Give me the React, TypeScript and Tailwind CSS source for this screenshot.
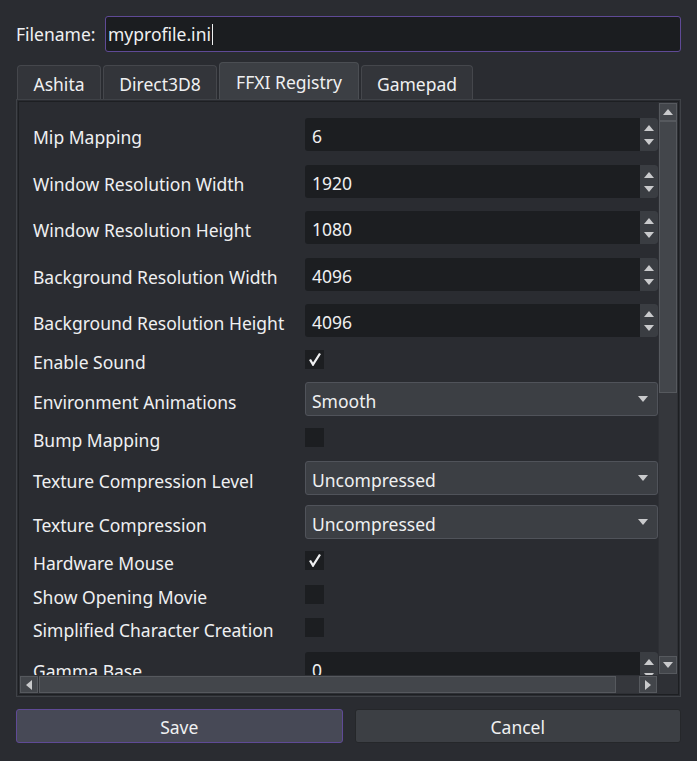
import React from "react";

function UpTri({ className = "" }: { className?: string }) {
  return (
    <svg width="10" height="6" viewBox="0 0 10 6" className={className}>
      <polygon points="0,6 10,6 5,0" fill="#c9cacc" />
    </svg>
  );
}
function DownTri({ className = "" }: { className?: string }) {
  return (
    <svg width="10" height="6" viewBox="0 0 10 6" className={className}>
      <polygon points="0,0 10,0 5,6" fill="#c9cacc" />
    </svg>
  );
}
function LeftTri() {
  return (
    <svg width="6" height="10" viewBox="0 0 6 10">
      <polygon points="6,0 6,10 0,5" fill="#c9cacc" />
    </svg>
  );
}
function RightTri() {
  return (
    <svg width="6" height="10" viewBox="0 0 6 10">
      <polygon points="0,0 0,10 6,5" fill="#c9cacc" />
    </svg>
  );
}

function Spin({ value }: { value: string }) {
  return (
    <div className="flex w-[356px] h-[33px] rounded-[3px] bg-[#1c1e21] overflow-hidden">
      <div className="flex-1 flex items-center pl-[7px] pt-[3px] text-[#eff0f1]">{value}</div>
      <div className="w-[18px] h-full bg-[#3a3d42] flex flex-col items-center justify-center gap-[8px]">
        <UpTri />
        <DownTri />
      </div>
    </div>
  );
}

function Combo({ value }: { value: string }) {
  return (
    <div className="flex items-center w-[356px] h-[34px] rounded-[3px] bg-[#3c3f44] border border-[#50535a] pl-[6px] pr-[9px]">
      <div className="flex-1 pt-[4px]">{value}</div>
      <DownTri />
    </div>
  );
}

function Check({ checked }: { checked?: boolean }) {
  return (
    <div className="w-[19px] h-[19px] bg-[#1c1e21] flex items-center justify-center">
      {checked && (
        <svg width="14" height="14" viewBox="0 0 14 14">
          <polyline points="2,7.5 5,12.5 12,1.5" fill="none" stroke="#eff0f1" strokeWidth="2.3" strokeLinejoin="miter" />
        </svg>
      )}
    </div>
  );
}

function Row({ label, mt, h, children }: { label: string; mt: string; h: string; children: React.ReactNode }) {
  return (
    <div className={`flex items-center ${mt} ${h} shrink-0`}>
      <div className="w-[272px] shrink-0 whitespace-nowrap pt-[5px]">{label}</div>
      {children}
    </div>
  );
}

export default function App() {
  return (
    <div className="w-[697px] h-[761px] bg-[#2a2c31] font-['Noto_Sans',sans-serif] text-[17.5px] leading-[24px] text-[#eff0f1] flex flex-col px-[16px] overflow-hidden">
      {/* Filename */}
      <div className="flex items-center mt-[16px] h-[36px] shrink-0">
        <div className="w-[89px] pt-[0px]">Filename:</div>
        <div className="flex-1 h-full rounded-[3px] bg-[#1b1d20] border border-[#5f4a96] flex items-center pl-[2px]">
          <span className="pt-[0px]">myprofile.ini</span>
          <span className="inline-block w-[1px] h-[21px] bg-[#eff0f1] ml-[1px]" />
        </div>
      </div>

      {/* Tabs */}
      <div className="flex items-end mt-[10px] h-[37px] shrink-0 pl-[1px] gap-[2px]">
        <div className="w-[84px] h-[34px] rounded-t-[4px] bg-[#33353a] border border-b-0 border-[#45474c] flex items-center justify-center pt-[3px]">Ashita</div>
        <div className="w-[114px] h-[34px] rounded-t-[4px] bg-[#33353a] border border-b-0 border-[#45474c] flex items-center justify-center pt-[3px]">Direct3D8</div>
        <div className="w-[140px] h-[37px] rounded-t-[4px] bg-[#3c3f44] border border-b-0 border-[#4b4e53] flex items-center justify-center pt-[2px]">FFXI Registry</div>
        <div className="w-[112px] h-[34px] rounded-t-[4px] bg-[#33353a] border border-b-0 border-[#45474c] flex items-center justify-center pt-[3px]">Gamepad</div>
      </div>

      {/* Pane */}
      <div className="h-[598px] shrink-0 border border-[#3f4247] bg-[#2a2c31] p-[1px] flex flex-col">
        <div className="flex-1 border border-[#1d1f22] flex flex-col min-h-0">
          <div className="flex flex-1 min-h-0">
            {/* viewport */}
            <div className="flex-1 overflow-hidden flex flex-col pl-[14px] pt-[16px]">
              <Row label="Mip Mapping" mt="mt-0" h="h-[33px]"><Spin value="6" /></Row>
              <Row label="Window Resolution Width" mt="mt-[14px]" h="h-[33px]"><Spin value="1920" /></Row>
              <Row label="Window Resolution Height" mt="mt-[13px]" h="h-[33px]"><Spin value="1080" /></Row>
              <Row label="Background Resolution Width" mt="mt-[14px]" h="h-[33px]"><Spin value="4096" /></Row>
              <Row label="Background Resolution Height" mt="mt-[13px]" h="h-[33px]"><Spin value="4096" /></Row>
              <Row label="Enable Sound" mt="mt-[11px]" h="h-[22px]"><Check checked /></Row>
              <Row label="Environment Animations" mt="mt-[12px]" h="h-[34px]"><Combo value="Smooth" /></Row>
              <Row label="Bump Mapping" mt="mt-[10px]" h="h-[22px]"><Check /></Row>
              <Row label="Texture Compression Level" mt="mt-[13px]" h="h-[34px]"><Combo value="Uncompressed" /></Row>
              <Row label="Texture Compression" mt="mt-[10px]" h="h-[34px]"><Combo value="Uncompressed" /></Row>
              <Row label="Hardware Mouse" mt="mt-[10px]" h="h-[22px]"><Check checked /></Row>
              <Row label="Show Opening Movie" mt="mt-[12px]" h="h-[22px]"><Check /></Row>
              <Row label="Simplified Character Creation" mt="mt-[11px]" h="h-[22px]"><Check /></Row>
              <Row label="Gamma Base" mt="mt-[14px]" h="h-[33px]"><Spin value="0" /></Row>
            </div>
            {/* vertical scrollbar */}
            <div className="w-[20px] shrink-0 bg-[#2e3035] flex flex-col p-[1px]">
              <div className="h-[18px] bg-[#43464b] border border-[#56595e] flex items-center justify-center"><UpTri /></div>
              <div className="h-[272px] bg-[#43464b] border border-[#56595e]" />
              <div className="flex-1 bg-[#35373c]" />
              <div className="h-[18px] bg-[#43464b] border border-[#56595e] flex items-center justify-center"><DownTri /></div>
            </div>
          </div>
          {/* horizontal scrollbar */}
          <div className="h-[19px] shrink-0 flex bg-[#2e3035]">
            <div className="flex-1 flex p-[1px]">
              <div className="w-[18px] bg-[#43464b] border border-[#56595e] flex items-center justify-center"><LeftTri /></div>
              <div className="w-[577px] ml-[1px] bg-[#43464b] border border-[#56595e]" />
              <div className="flex-1 bg-[#35373c]" />
              <div className="w-[18px] bg-[#43464b] border border-[#56595e] flex items-center justify-center"><RightTri /></div>
            </div>
            <div className="w-[20px] bg-[#2e3035]" />
          </div>
        </div>
      </div>

      {/* Buttons */}
      <div className="flex gap-[12px] mt-[12px] h-[34px] shrink-0">
        <div className="flex-1 rounded-[3px] bg-[#474956] border border-[#5f4a96] flex items-center justify-center pt-[2px]">Save</div>
        <div className="flex-1 rounded-[3px] bg-[#3c3f44] border border-[#25272a] flex items-center justify-center pt-[2px]">Cancel</div>
      </div>
    </div>
  );
}
